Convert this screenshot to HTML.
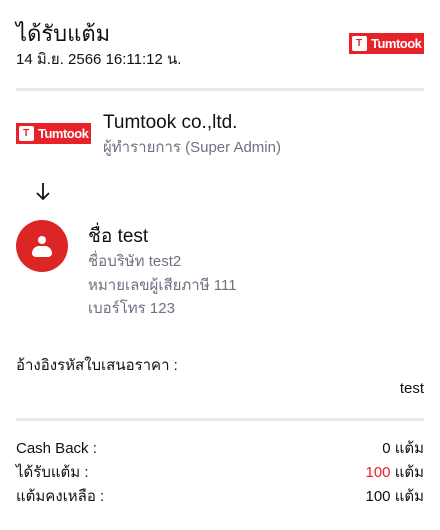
<!DOCTYPE html>
<html><head><meta charset="utf-8"><style>
*{margin:0;padding:0;box-sizing:border-box}
body{width:440px;height:530px;background:#fff;font-family:"Liberation Sans","Noto Sans CJK SC",sans-serif;color:#111;position:relative;overflow:hidden}
.a{position:absolute;white-space:nowrap;line-height:22px}
.logo{position:absolute;width:75px;height:21px;background:#e8222a;color:#fff;font-weight:bold;font-size:13px;line-height:21px}
.logo .b{position:absolute;left:3px;top:3px;width:15px;height:15px;background:#fff;border-radius:2px}
.logo .b:after{content:"T";position:absolute;left:4px;top:-3px;color:#e8222a;font-size:10px}
.logo span{position:absolute;left:22px;letter-spacing:-0.5px}
.hr{position:absolute;left:16px;width:408px;height:3px;background:#e5e7eb}
.g{color:#6b7280}
</style></head><body>
<div class="a" style="left:16px;top:21px;font-size:22px;line-height:26px">ได้รับแต้ม</div>
<div class="a" style="left:16px;top:49px;font-size:15px">14 มิ.ย. 2566 16:11:12 น.</div>
<div class="logo" style="left:349px;top:33px"><div class="b"></div><span>Tumtook</span></div>
<div class="hr" style="top:88px"></div>
<div class="logo" style="left:16px;top:123px"><div class="b"></div><span>Tumtook</span></div>
<div class="a" style="left:103px;top:111px;font-size:19px;line-height:24px">Tumtook co.,ltd.</div>
<div class="a g" style="left:103px;top:137px;font-size:15px">ผู้ทำรายการ (Super Admin)</div>
<svg class="a" style="left:35px;top:182px" width="16" height="19" viewBox="0 0 16 19"><path d="M8 1V17M2 11L8 17L14 11" stroke="#111" stroke-width="1.8" fill="none"/></svg>
<div class="a" style="left:16px;top:220px;width:52px;height:52px;border-radius:50%;background:#dc2626">
<div style="position:absolute;left:22px;top:16px;width:8px;height:8px;border-radius:50%;background:#fff"></div>
<div style="position:absolute;left:16px;top:26px;width:20px;height:11px;border-radius:10px 10px 5px 5px;background:#fff"></div>
</div>
<div class="a" style="left:88px;top:225px;font-size:19px;line-height:24px">ชื่อ test</div>
<div class="a g" style="left:88px;top:251px;font-size:15px">ชื่อบริษัท test2</div>
<div class="a g" style="left:88px;top:275px;font-size:15px">หมายเลขผู้เสียภาษี 111</div>
<div class="a g" style="left:88px;top:298px;font-size:15px">เบอร์โทร 123</div>
<div class="a" style="left:16px;top:355px;font-size:15px">อ้างอิงรหัสใบเสนอราคา :</div>
<div class="a" style="right:16px;top:378px;font-size:15px">test</div>
<div class="hr" style="top:418px"></div>
<div class="a" style="left:16px;top:438px;font-size:15px">Cash Back :</div>
<div class="a" style="right:16px;top:438px;font-size:15px">0 แต้ม</div>
<div class="a" style="left:16px;top:462px;font-size:15px">ได้รับแต้ม :</div>
<div class="a" style="right:16px;top:462px;font-size:15px"><span style="color:#e8222a">100</span> แต้ม</div>
<div class="a" style="left:16px;top:486px;font-size:15px">แต้มคงเหลือ :</div>
<div class="a" style="right:16px;top:486px;font-size:15px">100 แต้ม</div>
</body></html>
